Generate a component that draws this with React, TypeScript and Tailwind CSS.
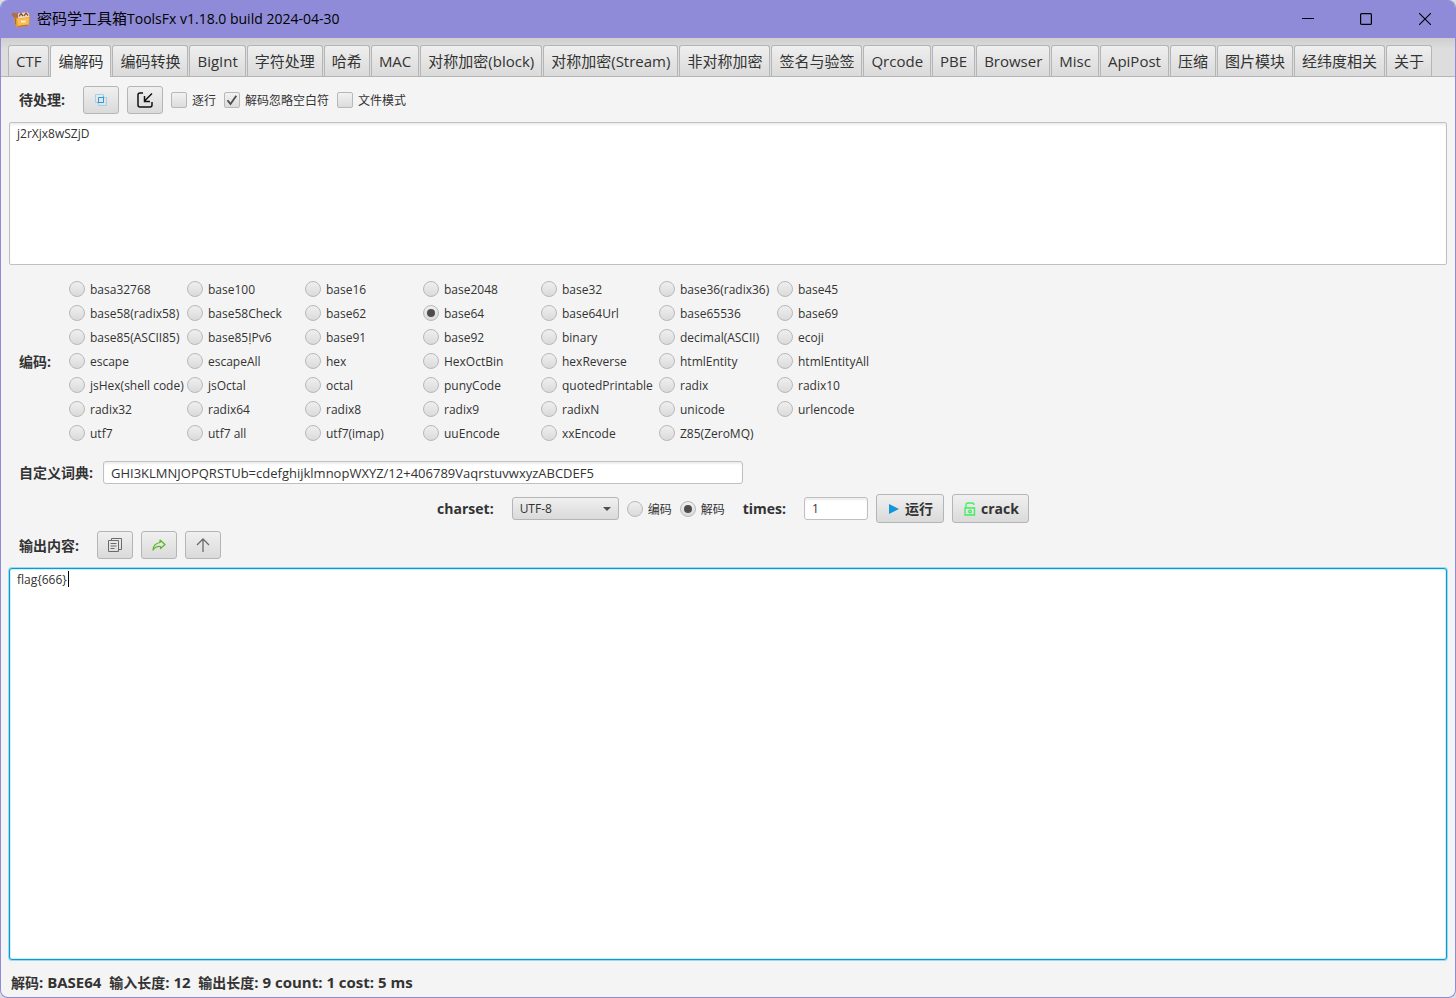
import { ReactNode, useState } from "react";

const tabs = [
  "CTF",
  "编解码",
  "编码转换",
  "BigInt",
  "字符处理",
  "哈希",
  "MAC",
  "对称加密(block)",
  "对称加密(Stream)",
  "非对称加密",
  "签名与验签",
  "Qrcode",
  "PBE",
  "Browser",
  "Misc",
  "ApiPost",
  "压缩",
  "图片模块",
  "经纬度相关",
  "关于",
];

const codecs = [
  "basa32768", "base100", "base16", "base2048", "base32", "base36(radix36)", "base45",
  "base58(radix58)", "base58Check", "base62", "base64", "base64Url", "base65536", "base69",
  "base85(ASCII85)", "base85ỊPv6", "base91", "base92", "binary", "decimal(ASCII)", "ecoji",
  "escape", "escapeAll", "hex", "HexOctBin", "hexReverse", "htmlEntity", "htmlEntityAll",
  "jsHex(shell code)", "jsOctal", "octal", "punyCode", "quotedPrintable", "radix", "radix10",
  "radix32", "radix64", "radix8", "radix9", "radixN", "unicode", "urlencode",
  "utf7", "utf7 all", "utf7(imap)", "uuEncode", "xxEncode", "Z85(ZeroMQ)",
];

type RadioProps = {
  name: string;
  label: string;
  checked: boolean;
  onChange: () => void;
};

const Radio = ({ name, label, checked, onChange }: RadioProps) => (
  <label className="flex h-6 items-center gap-[5px] whitespace-nowrap">
    <input
      type="radio"
      name={name}
      checked={checked}
      onChange={onChange}
      className="grid size-4 shrink-0 appearance-none place-content-center rounded-full border border-[#b8b8b8] bg-linear-to-b from-[#efefef] to-[#dadada] checked:before:size-2 checked:before:rounded-full checked:before:bg-[#4d4d4d] checked:before:content-['']"
    />
    <span className="pt-[2px]">{label}</span>
  </label>
);

const Check = ({ label, defaultChecked }: { label: string; defaultChecked?: boolean }) => (
  <label className="flex items-center gap-[5px] whitespace-nowrap">
    <span className="grid size-4 shrink-0">
      <input
        type="checkbox"
        defaultChecked={defaultChecked}
        className="peer col-start-1 row-start-1 size-4 appearance-none rounded-xs border border-[#b8b8b8] bg-linear-to-b from-[#f2f2f2] to-[#dcdcdc]"
      />
      <svg
        className="pointer-events-none invisible col-start-1 row-start-1 size-4 peer-checked:visible"
        viewBox="0 0 16 16"
        fill="none"
        aria-hidden="true"
      >
        <path d="M3.5 8.2 6.5 12 12.3 3.8" stroke="#4d4d4d" strokeWidth="1.8" />
      </svg>
    </span>
    <span className="pt-[2px]">{label}</span>
  </label>
);

const ToolButton = ({ label, children }: { label: string; children: ReactNode }) => (
  <button
    type="button"
    aria-label={label}
    className="flex h-7 w-9 items-center justify-center rounded-[3px] border border-[#b5b5b5] bg-linear-to-b from-[#f0f0f0] to-[#dadada]"
  >
    {children}
  </button>
);

const TitleBar = () => (
  <header className="flex h-[38px] shrink-0 items-center bg-[#8f8bd8] pl-[10px] text-black">
    <svg className="size-5" viewBox="0 0 20 20" aria-hidden="true">
      <path d="M3 7.500 17 6 19 7 18 16.500 6.500 18.500 4 16Z" fill="#e9992f" />
      <path d="M6 10 18 8.500 17.400 16 7 17.600Z" fill="#f7bd55" />
      <path d="M.5 4.500 3 3.500 5 4.500 7 3 8 8 4 9.500 1 6.500Z" fill="#a9714f" />
      <path d="M7 4.500 16 3 18 4.500V8L7 9.500Z" fill="#efd9c0" />
      <path d="M8 7.500 10 4.500 12 7M13 7 15 4 17 6.500" fill="none" stroke="#8b4a2c" strokeWidth="1.300" />
      <path d="M10 11.500h4.500v2H10z" fill="#fff0bd" />
      <path d="M4.500 9.500v6M7 17.400l10-1.400" stroke="#b56b20" />
    </svg>
    <h1 className="ml-[6px] pb-[2px] text-[15px]">
      密码学工具箱<span className="text-sm">ToolsFx v1.18.0 build 2024-04-30</span>
    </h1>
    <div className="ml-auto flex">
      <button type="button" aria-label="Minimize" className="flex h-[38px] w-[58px] items-center justify-center">
        <svg className="size-3" viewBox="0 0 12 12" aria-hidden="true">
          <path d="M0 5.500h12" stroke="#000" />
        </svg>
      </button>
      <button type="button" aria-label="Maximize" className="flex h-[38px] w-[58px] items-center justify-center">
        <svg className="size-3" viewBox="0 0 12 12" aria-hidden="true">
          <rect x=".6" y=".6" width="10.8" height="10.8" rx="1" fill="none" stroke="#000" strokeWidth="1.2" />
        </svg>
      </button>
      <button type="button" aria-label="Close" className="flex h-[38px] w-[60px] items-center justify-center">
        <svg className="size-3" viewBox="0 0 12 12" aria-hidden="true">
          <path d="m0 0 12 12M12 0 0 12" stroke="#000" strokeWidth="1.1" />
        </svg>
      </button>
    </div>
  </header>
);

const TabBar = () => (
  <nav
    role="tablist"
    className="flex h-[39px] shrink-0 items-end gap-px border-b border-[#b5b5b5] bg-linear-to-b from-[#cfcfcf] to-[#dddddd] to-30% pl-[7px] text-[15px]"
  >
    {tabs.map((tab) => (
      <button
        key={tab}
        type="button"
        role="tab"
        aria-selected={tab === "编解码"}
        className="h-[31px] rounded-t-[3px] border border-b-0 border-[#b5b5b5] bg-linear-to-b from-[#efefef] to-[#dadada] px-[7px] whitespace-nowrap aria-selected:-mb-px aria-selected:h-8 aria-selected:from-[#f4f4f4] aria-selected:to-[#f4f4f4] aria-selected:pb-px"
      >
        {tab}
      </button>
    ))}
  </nav>
);

export default function App() {
  const [codec, setCodec] = useState("base64");
  const [mode, setMode] = useState("解码");

  return (
    <div className="h-screen bg-[#dcdcdc] font-['Open_Sans','Noto_Sans_CJK_SC',sans-serif] text-xs text-[#333333]">
      <div className="flex h-full flex-col overflow-hidden rounded-lg border border-t-0 border-[#8f8bd8] bg-[#f4f4f4]">
        <TitleBar />
        <TabBar />
        <main className="flex min-h-0 grow flex-col px-2">
          <div className="mt-[9px] flex items-center gap-2 pl-[10px]">
            <label htmlFor="source" className="mr-[10px] text-sm font-bold">
              待处理:
            </label>
            <ToolButton label="复制">
              <svg className="size-3" viewBox="0 0 12 12" fill="none" aria-hidden="true">
                <path d="M.5.5h8v8h-8zM3.500 3.500h8v8h-8z" stroke="#9fd2ee" />
                <path d="M2.500 8.500h6v-6M3.500 8.500v-5h5" stroke="#2b9bdb" />
              </svg>
            </ToolButton>
            <ToolButton label="导入">
              <svg className="size-[18px]" viewBox="0 0 18 18" fill="none" stroke="#111" strokeWidth="1.5" aria-hidden="true">
                <path d="M7 2H4Q2 2 2 4v10q0 2 2 2h10q2 0 2-2v-3" />
                <path d="M16 2.500 9 9.500M8.500 5v5.500H14" />
              </svg>
            </ToolButton>
            <Check label="逐行" />
            <Check label="解码忽略空白符" defaultChecked />
            <Check label="文件模式" />
          </div>
          <textarea
            id="source"
            defaultValue="j2rXjx8wSZjD"
            className="mt-2 h-[143px] shrink-0 resize-none rounded-xs border border-[#c0c0c0] bg-white px-[7px] py-[3px] leading-4 shadow-[inset_0_2px_2px_#eeeeee] outline-none"
          />

          <fieldset className="mt-3 flex items-center pl-[10px]">
            <span className="w-[50px] pt-[2px] text-sm font-bold">编码:</span>
            <div className="grid grid-cols-[repeat(7,118px)]">
              {codecs.map((item) => (
                <Radio
                  key={item}
                  name="codec"
                  label={item}
                  checked={codec === item}
                  onChange={() => setCodec(item)}
                />
              ))}
            </div>
          </fieldset>

          <div className="mt-4 flex items-center pl-[10px]">
            <label htmlFor="dict" className="w-[84px] text-sm font-bold">
              自定义词典:
            </label>
            <input
              id="dict"
              type="text"
              defaultValue="GHI3KLMNJOPQRSTUb=cdefghijklmnopWXYZ/12+406789VaqrstuvwxyzABCDEF5"
              className="h-[23px] w-[640px] rounded-[3px] border border-[#c0c0c0] bg-white px-[7px] text-[13px] shadow-[inset_0_2px_2px_#eeeeee] outline-none"
            />
          </div>

          <div className="mt-[10px] flex items-center justify-center gap-2 pl-[10px]">
            <label htmlFor="charset" className="mr-[10px] text-sm font-bold">
              charset:
            </label>
            <div className="relative">
              <select
                id="charset"
                defaultValue="UTF-8"
                className="block h-[23px] w-[107px] appearance-none rounded-[3px] border border-[#b5b5b5] bg-linear-to-b from-[#f0f0f0] to-[#dadada] px-[7px] outline-none"
              >
                <option>UTF-8</option>
                <option>GBK</option>
                <option>ISO-8859-1</option>
              </select>
              <svg className="pointer-events-none absolute top-[10px] right-2 h-1 w-2" viewBox="0 0 8 4" aria-hidden="true">
                <path d="M0 0h8L4 4z" fill="#4d4d4d" />
              </svg>
            </div>
            <Radio name="mode" label="编码" checked={mode === "编码"} onChange={() => setMode("编码")} />
            <Radio name="mode" label="解码" checked={mode === "解码"} onChange={() => setMode("解码")} />
            <label htmlFor="times" className="mr-[10px] ml-[10px] text-sm font-bold">
              times:
            </label>
            <input
              id="times"
              type="text"
              defaultValue="1"
              className="h-[23px] w-16 rounded-[3px] border border-[#c0c0c0] bg-white px-[7px] shadow-[inset_0_2px_2px_#eeeeee] outline-none"
            />
            <button
              type="button"
              className="flex h-[29px] items-center gap-[6px] rounded-[3px] border border-[#b5b5b5] bg-linear-to-b from-[#f0f0f0] to-[#dadada] pr-[10px] pl-3 text-sm font-bold whitespace-nowrap"
            >
              <svg className="h-[10px] w-[10px]" viewBox="0 0 10 10" aria-hidden="true">
                <path d="M0 0 10 5 0 10z" fill="#1296db" />
              </svg>
              运行
            </button>
            <button
              type="button"
              className="flex h-[29px] items-center gap-[5px] rounded-[3px] border border-[#b5b5b5] bg-linear-to-b from-[#f0f0f0] to-[#dadada] pr-[9px] pl-[11px] text-sm font-bold"
            >
              <svg className="h-[14px] w-3" viewBox="0 0 12 14" fill="none" stroke="#3df05a" strokeWidth="1.3" aria-hidden="true">
                <path d="M2 6V3q0-2 2-2h4q2 0 2 2" />
                <path d="M1 6h9.500v7H1z" />
                <circle cx="6" cy="9.500" r="1.300" />
              </svg>
              crack
            </button>
          </div>

          <div className="mt-2 flex items-center gap-2 pl-[10px]">
            <label htmlFor="output" className="mr-[10px] pt-[2px] text-sm font-bold">
              输出内容:
            </label>
            <ToolButton label="复制结果">
              <svg className="size-[14px]" viewBox="0 0 14 14" fill="none" stroke="#6b6b6b" aria-hidden="true">
                <path d="M.5 2.500h10v11H.5zM3.500 2.500v-2h10v11h-3" />
                <path d="M2.500 5.500h6M2.500 8h6M2.500 10.500h4" />
              </svg>
            </ToolButton>
            <ToolButton label="转发">
              <svg className="h-3 w-[14px]" viewBox="0 0 14 12" fill="none" stroke="#58b820" strokeWidth="1.200" strokeLinejoin="round" aria-hidden="true">
                <path d="M8 1 13 5.500 8.500 9.500V7.500Q4 7 1 11 1.500 4.500 8 3.500Z" />
              </svg>
            </ToolButton>
            <ToolButton label="上移">
              <svg className="size-[14px]" viewBox="0 0 14 14" fill="none" stroke="#6b6b6b" strokeWidth="1.300" aria-hidden="true">
                <path d="M7 14V1M1 7l6-6 6 6" />
              </svg>
            </ToolButton>
          </div>
          <div className="relative mt-[9px] flex min-h-0 grow">
            <textarea
              id="output"
              defaultValue="flag{666}"
              className="grow resize-none rounded-[3px] border border-[#039ed3] bg-white px-[7px] py-[3px] leading-4 shadow-[inset_0_0_0_1px_#d3edf6,0_0_0_1px_#9fd9ec] outline-none"
            />
            <span className="absolute top-[3px] left-[59px] h-4 w-px bg-black" />
          </div>
        </main>
        <footer className="flex h-[37px] shrink-0 items-center px-[10px] pt-2 text-sm font-bold">
          <p className="whitespace-pre">
            解码<span className="text-[15px]">: BASE64  </span>
            输入长度<span className="text-[15px]">: 12  </span>
            输出长度<span className="text-[15px]">: 9 count: 1 cost: 5 ms</span>
          </p>
        </footer>
      </div>
    </div>
  );
}
